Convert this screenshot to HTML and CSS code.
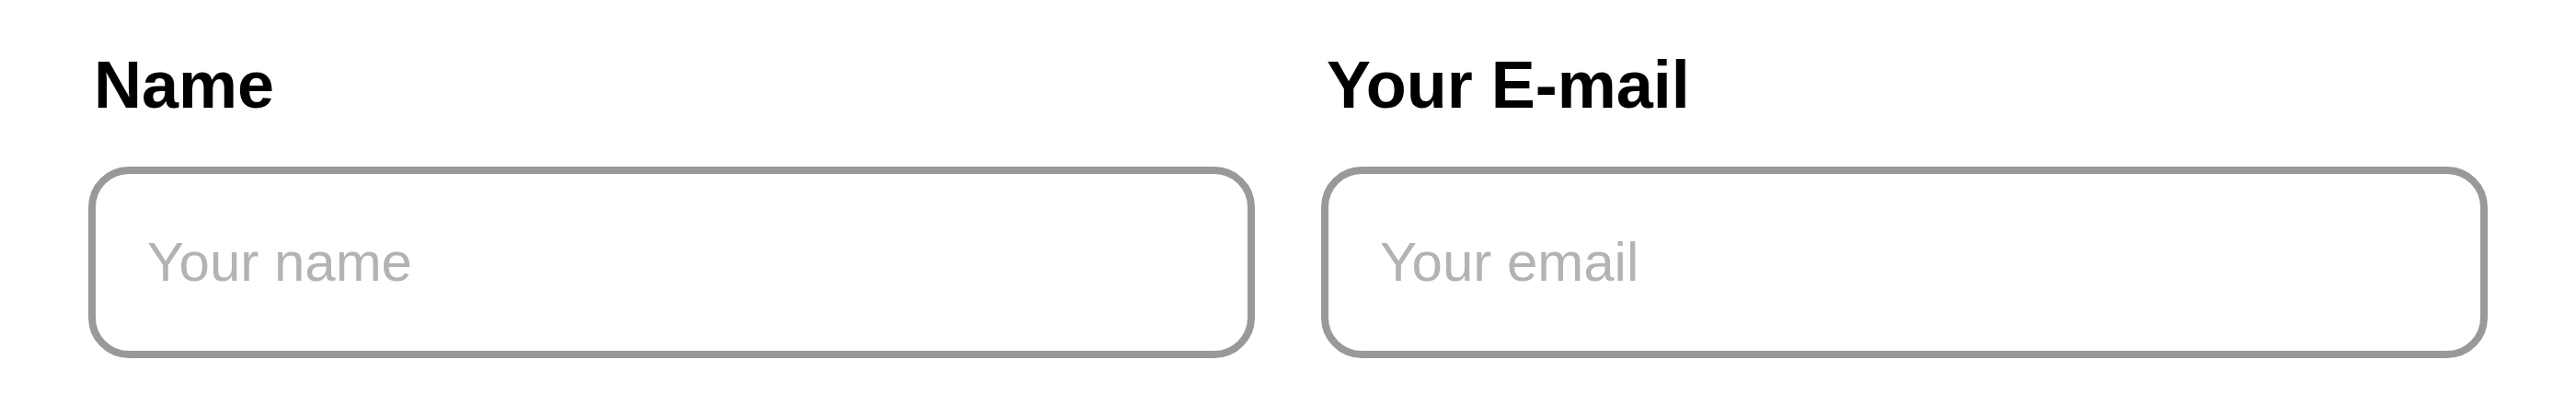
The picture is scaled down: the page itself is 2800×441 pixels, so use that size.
FILE: index.html
```html
<!DOCTYPE html>
<html lang="en">
<head>
<meta charset="utf-8">
<title>Contact</title>
<link rel="stylesheet" href="styles.css">
</head>
<body>
<form class="form">
  <div class="field">
    <label class="label" for="name">Name</label>
    <input class="input" id="name" type="text" placeholder="Your name">
  </div>
  <div class="field">
    <label class="label" for="email">Your E-mail</label>
    <input class="input" id="email" type="email" placeholder="Your email">
  </div>
</form>
</body>
</html>
```

FILE: styles.css
```css
* {
  box-sizing: border-box;
}

body {
  margin: 0;
  background: #fff;
  color: #000;
  font-family: "Liberation Sans", Arial, sans-serif;
}

.form {
  display: grid;
  grid-template-columns: 1fr 1fr;
  gap: 72px;
  padding: 51px 96px;
}

.field {
  display: flex;
  flex-direction: column;
  gap: 48px;
}

.label {
  padding-left: 6px;
  font-size: 72px;
  font-weight: 700;
  line-height: 82px;
}

.input {
  width: 100%;
  height: 208px;
  padding: 0 56px 2px;
  border: 8px solid #999;
  border-radius: 44px;
  background: #fff;
  color: #000;
  font-family: inherit;
  font-size: 60px;
}

.input::placeholder {
  color: #b3b3b3;
  opacity: 1;
}
```
